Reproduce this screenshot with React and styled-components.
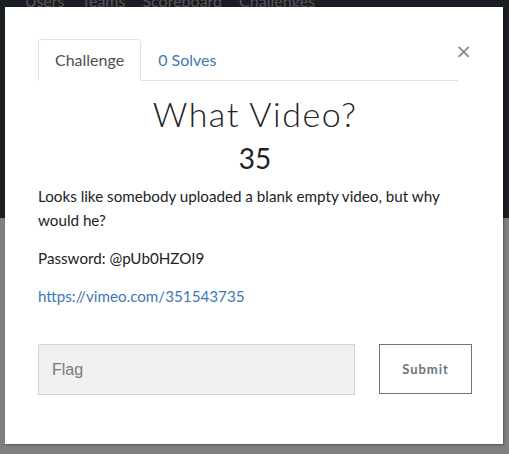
import React from "react";
import styled, { createGlobalStyle } from "styled-components";

const GlobalStyle = createGlobalStyle`
  html, body {
    margin: 0;
    padding: 0;
    background: #7f7f7f;
    font-family: Lato, "Open Sans", sans-serif;
  }
`;

const Page = styled.div`
  position: relative;
  width: 509px;
  height: 454px;
  overflow: hidden;
  background: linear-gradient(to bottom, #1a1d21 0, #1a1d21 218px, #7f7f7f 218px);
`;

const NavBar = styled.div`
  display: flex;
  gap: 17px;
  padding-left: 25px;
  margin-top: -9px;
  height: 20px;
  font-size: 16px;
  color: #53575c;
`;

const Modal = styled.div`
  position: absolute;
  left: 5px;
  top: 7px;
  width: 498px;
  height: 437px;
  background: #fff;
  box-shadow: 1px 1px 2px rgba(0, 0, 0, 0.35);
  box-sizing: border-box;
  padding: 32px 31px 0 33px;
`;

const Header = styled.div`
  display: flex;
  align-items: flex-start;
  padding-right: 14px;
  position: relative;
`;

const Tabs = styled.div`
  display: flex;
  flex: 1;
  border-bottom: 1px solid #dee2e6;
`;

const Tab = styled.div`
  padding: 10px 16px 11px;
  font-size: 16px;
  line-height: 19px;
  margin-bottom: -1px;
  border: 1px solid ${(p) => (p.$active ? "#dee2e6" : "transparent")};
  border-bottom-color: ${(p) => (p.$active ? "#fff" : "transparent")};
  border-radius: 4px 4px 0 0;
  color: ${(p) => (p.$active ? "#495057" : "#3c78b5")};
`;

const Close = styled.div`
  position: absolute;
  right: 0;
  top: 2px;
  font-family: "DejaVu Sans", sans-serif;
  font-size: 20px;
  line-height: 20px;
  color: #888;
`;

const Title = styled.h3`
  margin: 13px 0 0;
  text-align: center;
  font-family: Lato, sans-serif;
  font-weight: 300;
  font-size: 34px;
  line-height: 40px;
  letter-spacing: 1.5px;
  color: #222;
`;

const Value = styled.h4`
  margin: 8px 0 0;
  text-align: center;
  font-weight: 400;
  font-size: 28px;
  line-height: 32px;
  color: #222;
`;

const Description = styled.div`
  margin-top: 10px;
  font-size: 15.2px;
  line-height: 24px;
  color: #222;

  p {
    margin: 0 0 14px;
  }

  p:last-child {
    margin-bottom: 0;
  }

  a {
    color: #3c78b5;
    text-decoration: none;
  }
`;

const SubmitRow = styled.div`
  display: flex;
  gap: 24px;
  margin-top: 36px;
`;

const FlagInput = styled.input`
  width: 317px;
  height: 51px;
  box-sizing: border-box;
  background: #f0f0f0;
  border: 1px solid #cfd6dc;
  padding: 0 13px;
  font-family: "Liberation Sans", Arial, sans-serif;
  font-size: 16px;
  color: #555;

  &::placeholder {
    color: #7a7a7a;
  }
`;

const SubmitButton = styled.button`
  width: 93px;
  height: 50px;
  background: #fff;
  border: 1px solid #6c757d;
  font-family: Lato, sans-serif;
  font-weight: 700;
  font-size: 13px;
  letter-spacing: 1px;
  color: #6c757d;
`;

export default function App() {
  return (
    <>
      <GlobalStyle />
      <Page>
        <NavBar>
          <span>Users</span>
          <span>Teams</span>
          <span>Scoreboard</span>
          <span>Challenges</span>
        </NavBar>
        <Modal>
          <Header>
            <Tabs>
              <Tab $active>Challenge</Tab>
              <Tab>0 Solves</Tab>
            </Tabs>
            <Close>×</Close>
          </Header>
          <Title>What Video?</Title>
          <Value>35</Value>
          <Description>
            <p>Looks like somebody uploaded a blank empty video, but why would he?</p>
            <p>Password: @pUb0HZOI9</p>
            <p>
              <a href="#">https://vimeo.com/351543735</a>
            </p>
          </Description>
          <SubmitRow>
            <FlagInput placeholder="Flag" />
            <SubmitButton>Submit</SubmitButton>
          </SubmitRow>
        </Modal>
      </Page>
    </>
  );
}
